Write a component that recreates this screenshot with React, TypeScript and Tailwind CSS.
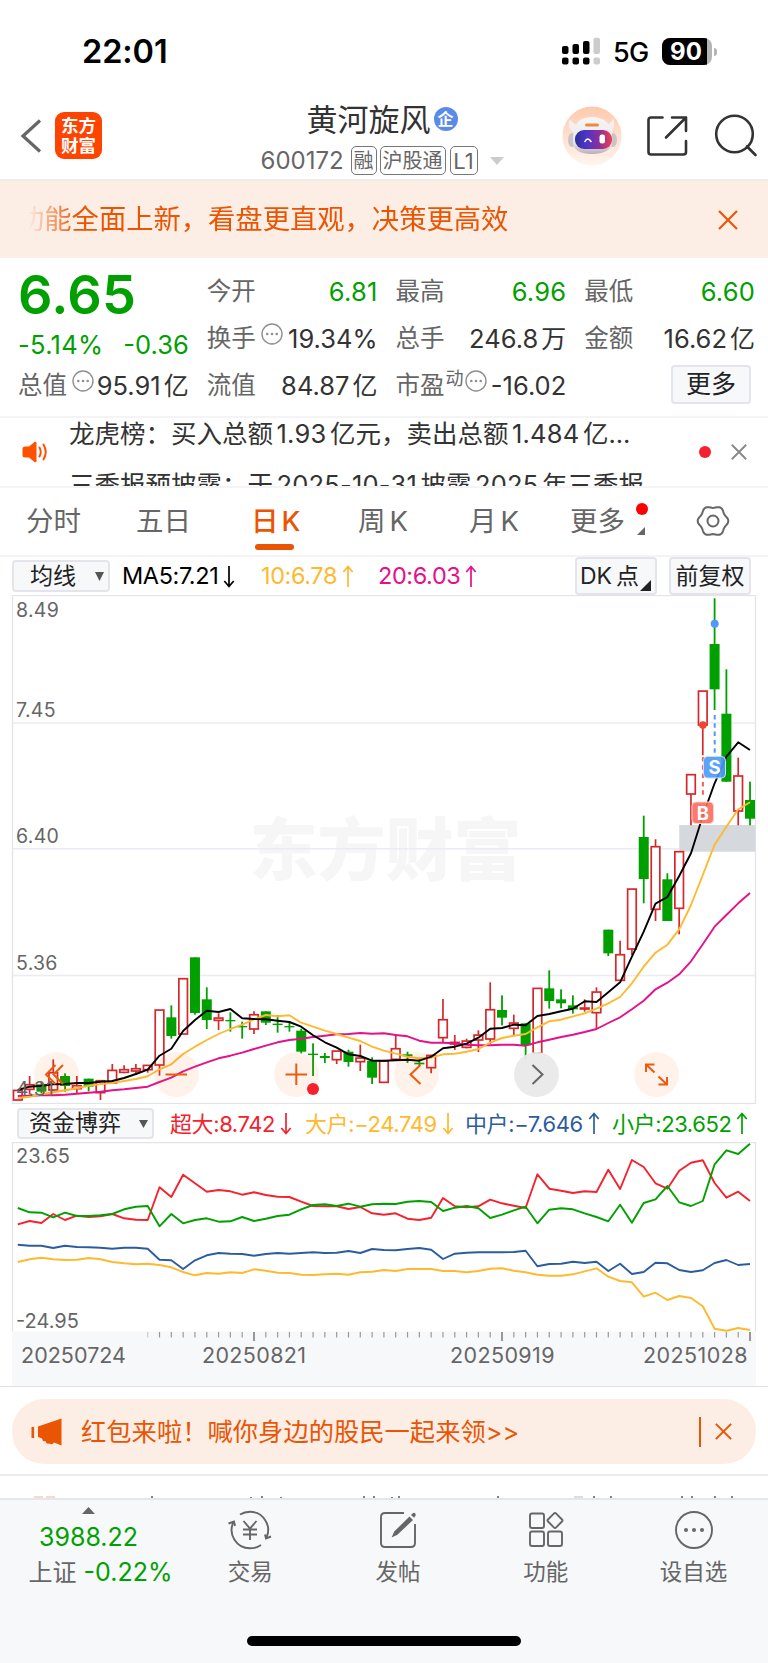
import React from "react";

type Candle = [string, number, number, number, number];

const PITCH = 11.81;
const X0 = 17.8;
const px = (i: number) => X0 + PITCH * i;

/* colour, wick top, body top, body bottom, wick bottom */
const EARLY: Candle[] = [
  ["r", 570, 570, 600, 600], ["r", 528, 553, 568, 583], ["g", 545, 553, 575, 580], ["r", 478, 517, 570, 572],
  ["g", 520, 528, 558, 575], ["r", 528, 556, 566, 580], ["g", 536, 536, 560, 574], ["r", 541, 541, 578, 600],
  ["r", 492, 510, 549, 549], ["r", 496, 508, 517, 520], ["r", 492, 505, 513, 525], ["r", 495, 495, 509, 518],
  ["r", 329, 329, 495, 527], ["g", 316, 352, 408, 416], ["r", 235, 235, 402, 402], ["g", 172, 172, 339, 344],
  ["g", 262, 298, 360, 387], ["r", 340, 353, 361, 390], ["g", 337, 360, 364, 395], ["g", 365, 378, 382, 416],
  ["r", 334, 343, 387, 402], ["g", 334, 334, 368, 375], ["g", 345, 371, 375, 398], ["g", 366, 378, 382, 395],
  ["g", 386, 392, 455, 460], ["g", 430, 461, 465, 528], ["g", 459, 468, 474, 489], ["r", 452, 452, 479, 492],
  ["g", 449, 455, 486, 500], ["r", 434, 473, 485, 513], ["g", 472, 482, 533, 552], ["r", 482, 482, 547, 547],
  ["r", 402, 445, 478, 482], ["g", 455, 463, 469, 489], ["g", 474, 488, 493, 497], ["r", 465, 465, 503, 520],
  ["r", 297, 358, 413, 428], ["r", 405, 426, 432, 450], ["r", 416, 422, 442, 445], ["r", 391, 404, 420, 456],
  ["r", 247, 328, 417, 432], ["g", 286, 330, 353, 376], ["r", 344, 368, 385, 406], ["g", 370, 370, 436, 478],
  ["r", 264, 264, 460, 460], ["g", 211, 265, 303, 326], ["g", 268, 298, 310, 325], ["g", 286, 316, 328, 341],
  ["r", 298, 323, 327, 335], ["r", 262, 275, 338, 387], ["g", 89, 89, 160, 168], ["r", 122, 163, 241, 241],
];
const LATE: Candle[] = [
  ["r", 888.7, 888.7, 949, 955], ["g", 815.7, 837, 879, 903.3], ["r", 839.3, 846.3, 909.3, 921], ["g", 873.3, 879.3, 921, 921],
  ["r", 851.3, 851.3, 908.3, 934.3], ["r", 774.3, 774.3, 794, 825.3], ["r", 690.7, 690.7, 725, 755.3], ["g", 598.3, 644, 689.3, 710],
  ["g", 669.3, 713.7, 781.7, 781.7], ["r", 757.7, 775.6, 811, 825.3], ["g", 781.7, 800, 818.7, 825.3],
];
const third = (v: number) => 900 + v / 3;
const CANDLES: Candle[] = [
  ...EARLY.map(([c, a, b, d, e]): Candle => [c, third(a), third(b), third(d), third(e)]),
  ...LATE,
];

const MA5 = [
  ...[570, 560, 557, 553, 552, 549, 549, 545, 543, 534, 522, 509, 467, 446, 393, 360, 332, 336, 327, 355, 357, 358, 362, 366, 380, 406, 427, 443, 463, 468, 482, 482, 481, 479, 482, 470, 445, 440, 431, 413, 386, 384, 374, 376, 348, 342, 334, 326, 304, 306, 277, 247, 170, 95].map(third),
  903.7, 897, 876, 853.3, 816, 783.3, 756.7, 742.3, 750,
];
const MA10 = [
  ...[594, 590, 583, 577, 571, 565, 557, 552, 549, 543, 537, 529, 508, 493, 462, 440, 420, 402, 387, 374, 358, 345, 349, 346, 368, 380, 392, 402, 413, 423, 440, 452, 461, 470, 475, 473, 463, 461, 455, 447, 428, 414, 407, 402, 382, 364, 359, 349, 340, 326, 310, 291, 250, 200, 158, 134, 88].map(third),
  905, 875, 844.7, 826.7, 809.3, 802.3,
];
const MA20 = [
  ...[588, 587, 586, 586, 584, 581, 578, 575, 571, 568, 564, 560, 546, 533, 514, 500, 487, 475, 467, 458, 447, 437, 427, 420, 416, 411, 407, 403, 402, 399, 401, 400, 405, 409, 422, 428, 428, 430, 434, 436, 436, 434, 434, 437, 427, 419, 411, 404, 396, 387, 369, 352, 328, 302, 268, 248, 223, 184, 133].map(third),
  926.7, 915, 903.3, 893,
];

const flow = (v: number) => 1100 + v / 3;
const SUPER = [373, 363, 369, 342, 360, 347, 351, 349, 342, 355, 359, 360, 262, 291, 224, 250, 275, 270, 274, 284, 277, 285, 290, 291, 305, 318, 319, 319, 327, 321, 340, 344, 340, 356, 360, 353, 294, 319, 322, 319, 299, 310, 317, 324, 223, 266, 272, 279, 274, 276, 209, 267, 180, 201, 250, 266, 212, 188, 181, 249, 293, 275, 303].map(flow);
const SMALL = [324, 337, 338, 352, 338, 348, 348, 346, 342, 328, 320, 318, 379, 342, 370, 360, 355, 365, 364, 351, 363, 356, 348, 344, 328, 315, 313, 318, 311, 320, 313, 311, 312, 305, 303, 306, 333, 323, 318, 325, 354, 344, 331, 320, 370, 329, 325, 328, 340, 351, 364, 314, 368, 309, 298, 258, 307, 318, 303, 193, 151, 162, 131].map(flow);
const MIDDLE = [434, 437, 437, 444, 437, 441, 442, 443, 446, 443, 443, 446, 479, 481, 507, 481, 466, 459, 461, 462, 467, 462, 459, 461, 459, 457, 459, 458, 453, 459, 447, 450, 451, 447, 444, 449, 477, 461, 458, 457, 457, 457, 456, 452, 499, 492, 491, 485, 489, 485, 513, 491, 522, 516, 488, 490, 510, 516, 511, 489, 480, 495, 492].map(flow);
const BIG = [486, 478, 473, 478, 480, 479, 474, 478, 486, 490, 493, 491, 495, 502, 516, 526, 519, 521, 517, 519, 508, 512, 518, 519, 524, 525, 523, 521, 524, 517, 515, 510, 513, 507, 507, 507, 513, 513, 517, 513, 506, 505, 512, 517, 524, 527, 527, 523, 514, 505, 530, 543, 547, 590, 578, 600, 588, 594, 619, 686, 692, 684, 690].map(flow);

const pts = (a: number[]) => a.map((y, i) => `${px(i).toFixed(1)},${y.toFixed(1)}`).join(" ");

/* six-lobed outline of the settings gear */
const GEAR = Array.from({ length: 72 }, (_, k) => {
  const a = (k * Math.PI) / 36;
  const r = 14.2 + 1.1 * Math.cos(6 * a);
  return `${(17 + r * Math.cos(a)).toFixed(2)},${(17 + r * Math.sin(a)).toFixed(2)}`;
}).join(" ");

function Line({ data, color }: { data: number[]; color: string }) {
  return <polyline points={pts(data)} fill="none" stroke={color} strokeWidth="1.9" strokeLinejoin="round" />;
}

function Cross({ size, color, width }: { size: number; color: string; width: number }) {
  return (
    <svg width={size} height={size} viewBox="0 0 20 20" className="block shrink-0" stroke={color} strokeWidth={width} fill="none">
      <path d="M1 1L19 19M19 1L1 19" />
    </svg>
  );
}

function Dots() {
  return (
    <svg width="22" height="22" viewBox="0 0 22 22" className="block shrink-0">
      <circle cx="11" cy="11" r="10" fill="none" stroke="#8f8f8f" strokeWidth="1.4" />
      <g fill="#8f8f8f"><circle cx="6.3" cy="11" r="1.3" /><circle cx="11" cy="11" r="1.3" /><circle cx="15.7" cy="11" r="1.3" /></g>
    </svg>
  );
}

function StatusBar() {
  return (
    <div className="flex h-[90px] items-start pl-[82px]">
      <div className="mt-[36px] w-[479px] text-[32.500px] leading-[32px] font-semibold tracking-[-0.1px] text-black">22:01</div>
      <svg width="40" height="28" viewBox="0 0 40 28" className="mt-[37px]">
        <g fill="#000">
          <rect x="1" y="9" width="6.5" height="8" rx="2" /><rect x="11.5" y="7" width="6.5" height="10" rx="2" /><rect x="22" y="4" width="6.5" height="13" rx="2" />
          <rect x="1" y="20.5" width="6.5" height="7" rx="2" /><rect x="11.5" y="20.5" width="6.5" height="7" rx="2" /><rect x="22" y="20.5" width="6.5" height="7" rx="2" />
        </g>
        <g fill="#ccc"><rect x="32.5" y="0.7" width="6.5" height="16.3" rx="2" /><rect x="32.5" y="20.5" width="6.5" height="7" rx="2" /></g>
      </svg>
      <div className="mt-[40px] ml-[12px] w-[49px] text-[27px] leading-[26px] font-medium tracking-[-0.6px] text-black">5G</div>
      <div className="mt-[38px] flex items-center">
        <div className="flex h-[27px] w-[50px] overflow-hidden rounded-[8px] bg-[#b5b5b5]">
          <div className="flex h-full w-[45px] items-center justify-center bg-black pl-[3px] text-[24px] leading-none font-bold text-white">90</div>
        </div>
        <div className="ml-[1.5px] h-[8px] w-[3px] rounded-r-full bg-[#b5b5b5]" />
      </div>
    </div>
  );
}

function Robot() {
  return (
    <svg width="60" height="60" viewBox="0 0 60 60" className="mt-[16px] shrink-0">
      <defs>
        <linearGradient id="halo" x1="0" y1="0" x2="0" y2="1"><stop offset="0" stopColor="#ffc9ad" /><stop offset="1" stopColor="#fff5ef" /></linearGradient>
        <linearGradient id="visor" x1="0" y1="0" x2="1" y2="0"><stop offset="0" stopColor="#2e3192" /><stop offset=".3" stopColor="#4b35c8" /><stop offset=".65" stopColor="#8b2f9c" /><stop offset="1" stopColor="#ee3f4e" /></linearGradient>
        <linearGradient id="shell" x1="0" y1="0" x2="0" y2="1"><stop offset="0" stopColor="#f7f5f6" /><stop offset=".7" stopColor="#ebe7e9" /><stop offset="1" stopColor="#b8b0b6" /></linearGradient>
      </defs>
      <circle cx="30" cy="30" r="29.5" fill="url(#halo)" />
      <path d="M8 13C5 19 8 26 14 27L19 18C13 19 10 17 8 13ZM51 13C54 19 51 26 46 27L41 18C47 19 49 17 51 13Z" fill="#f3f0f2" />
      <ellipse cx="10" cy="34" rx="4" ry="7" fill="#c9c4ca" /><ellipse cx="51" cy="34" rx="4" ry="7" fill="#c9c4ca" />
      <path d="M30 11C18 11 11 18 11 30V36C11 44 18 48 30 48S50 44 50 36V30C50 18 42 11 30 11Z" fill="url(#shell)" />
      <rect x="23" y="17.4" width="14" height="3" rx="1.5" fill="#e88b45" />
      <rect x="13" y="24" width="37" height="19" rx="9" fill="url(#visor)" />
      <path d="M23 35.500Q25.500 30.500 29 35.500" fill="none" stroke="#fff" strokeWidth="1.6" strokeLinecap="round" />
      <rect x="37.500" y="28.500" width="5.500" height="9" rx="2.300" fill="#fff" />
    </svg>
  );
}

function Header() {
  const tag = "flex h-[29px] items-center justify-center rounded-[5px] border border-[#777] leading-none text-[#666]";
  return (
    <header className="flex h-[91px] items-start border-b-2 border-[#ececee]">
      <svg width="24" height="36" viewBox="0 0 24 36" className="mt-[28px] ml-[19px] shrink-0"><path d="M21 2.500L4 18L21 33.500" fill="none" stroke="#666" strokeWidth="3.2" /></svg>
      <div className="mt-[22px] ml-[12px] flex h-[47px] w-[47px] shrink-0 flex-col items-center justify-center rounded-[9px] bg-[#ff4400] text-[17.500px] leading-[19.500px] font-bold text-white">
        <span>东方</span><span>财富</span>
      </div>
      <div className="mt-[12px] flex w-[460px] shrink-0 flex-col items-center pl-[100px]">
        <div className="flex h-[34px] items-center">
          <h1 className="text-[31px] leading-none font-normal text-[#333]">黄河旋风</h1>
          <span className="ml-[3px] flex h-[24px] w-[24px] items-center justify-center rounded-full bg-[#5b8bea] text-[16px] leading-none font-bold text-white">企</span>
        </div>
        <div className="mt-[10px] flex items-center">
          <span className="w-[90px] text-[24px] leading-none text-[#666]">600172</span>
          <span className={`${tag} w-[26px] text-[20px]`}>融</span>
          <span className={`${tag} ml-[3px] w-[66px] text-[20px]`}>沪股通</span>
          <span className={`${tag} ml-[4px] w-[28px] text-[22px]`}>L1</span>
          <svg width="14" height="8" viewBox="0 0 14 8" className="ml-[12px]"><path d="M0 0H14L7 8Z" fill="#ccc" /></svg>
        </div>
      </div>
      <div className="flex shrink-0 items-start">
        <Robot />
        <svg width="42" height="42" viewBox="0 0 42 42" className="mt-[25px] ml-[24px]" fill="none" stroke="#333" strokeWidth="2.6" strokeLinecap="round" strokeLinejoin="round">
          <path d="M16.500 2.500H5Q2.500 2.500 2.500 5V37Q2.500 39.500 5 39.500H37.500Q40 39.500 40 37V26M40 16V2.500H26M40 2.500L20 22.500" />
        </svg>
        <svg width="44" height="44" viewBox="0 0 44 44" className="mt-[23px] ml-[26px]" fill="none" stroke="#333" strokeWidth="2.6" strokeLinecap="round">
          <circle cx="20.500" cy="21" r="18.300" /><path d="M33 33.500L41.500 42" />
        </svg>
      </div>
    </header>
  );
}

function Cell({ label, value, unit, green, extra }: { label: string; value: string; unit?: string; green?: boolean; extra?: React.ReactNode }) {
  return (
    <div className="flex h-[47px] items-center justify-between">
      <span className="flex items-center text-[24.500px] leading-none whitespace-nowrap text-[#666]">{label}{extra}</span>
      <span className={green ? "text-[25.500px] leading-none tracking-[0.2px] whitespace-nowrap text-[#00a000]" : "text-[25.500px] leading-none whitespace-nowrap text-[#333]"}>
        {value}{unit && <span className="ml-[3px] text-[25px]">{unit}</span>}
      </span>
    </div>
  );
}

function Quote() {
  return (
    <section className="grid h-[160px] grid-cols-4 content-start gap-x-[18px] border-b-2 border-[#f4f4f6] pt-[10px] pr-[13px] pl-[18px]">
      <div className="row-span-2 flex h-[94px] flex-col text-[#00a000]">
        <div className="text-[54px] leading-[53px] font-semibold tracking-[0.3px]">6.65</div>
        <div className="mt-[11px] flex justify-between text-[25.500px] leading-[25px]"><span className="tracking-[0.3px]">-5.14%</span><span>-0.36</span></div>
      </div>
      <Cell label="今开" value="6.81" green /><Cell label="最高" value="6.96" green /><Cell label="最低" value="6.60" green />
      <Cell label="换手" value="19.34%" extra={<span className="mb-[10px] ml-[5px]"><Dots /></span>} />
      <Cell label="总手" value="246.8" unit="万" /><Cell label="金额" value="16.62" unit="亿" />
      <Cell label="总值" value="95.91" unit="亿" extra={<span className="mb-[10px] ml-[5px]"><Dots /></span>} />
      <Cell label="流值" value="84.87" unit="亿" />
      <Cell label="市盈" value="-16.02" extra={<><span className="mb-[14px] ml-[1px] text-[18px]">动</span><span className="mb-[10px] ml-[1px]"><Dots /></span></>} />
      <div className="flex h-[47px] items-center justify-end pr-[4px]">
        <button className="mb-[3px] h-[39px] w-[80px] rounded-[4px] border-2 border-[#e3e5ea] bg-[#f7f8fa] text-[25px] leading-none text-[#222]">更多</button>
      </div>
    </section>
  );
}

function News() {
  const num = "mx-[3.500px] tracking-[0.2px]";
  return (
    <section className="flex h-[70px] items-center overflow-hidden border-b-2 border-[#f4f4f6]">
      <svg width="28" height="24" viewBox="0 0 28 24" className="ml-[21px] shrink-0">
        <path d="M1.500 9Q1.500 6.500 4 6.500H8L13.500 2Q15.500 1.200 15.500 3V21Q15.500 22.800 13.500 22L8 17.500H4Q1.500 17.500 1.500 15Z" fill="#ff5000" />
        <path d="M18.500 7.500Q21 12 18.500 16.500M22.500 4.500Q27 12 22.500 19.500" fill="none" stroke="#ff5000" strokeWidth="2" strokeLinecap="round" />
      </svg>
      <div className="ml-[20px] h-full w-[630px] overflow-hidden text-[25.500px] leading-[51px] whitespace-nowrap text-[#333]">
        <p className="-mt-[10px]">龙虎榜：买入总额<span className={num}>1.93</span>亿元，卖出总额<span className={num}>1.484</span>亿...</p>
        <p>三季报预披露：于<span className={num}>2025-10-31</span>披露<span className={num}>2025</span>年三季报</p>
      </div>
      <div className="h-[12px] w-[12px] shrink-0 rounded-full bg-[#f5222d]" />
      <div className="ml-[20px]"><Cross size={16} color="#888" width={2.4} /></div>
    </section>
  );
}

function Tabs() {
  const t = "flex h-full items-center pt-[1px] text-[27.500px] leading-none whitespace-nowrap";
  return (
    <nav className="flex h-[69px] items-start border-b-2 border-[#f4f4f6] pl-[26px] text-[#666]">
      <div className={`${t} w-[110px]`}>分时</div>
      <div className={`${t} w-[115px]`}>五日</div>
      <div className={`${t} relative w-[107px] font-medium text-[#ea5504]`}>日<span className="ml-[3px]">K</span><span className="absolute bottom-[5px] left-[4px] h-[6px] w-[39px] rounded-full bg-[#ea5504]" /></div>
      <div className={`${t} w-[111px]`}>周<span className="ml-[4px]">K</span></div>
      <div className={`${t} w-[101px]`}>月<span className="ml-[4px]">K</span></div>
      <div className={`${t} relative w-[126px]`}>更多
        <span className="absolute top-[15px] left-[66px] h-[12px] w-[12px] rounded-full bg-[#ff0000]" />
        <svg width="8" height="8" viewBox="0 0 8 8" className="absolute top-[39px] left-[67px]"><path d="M8 0V8H0Z" fill="#666" /></svg>
      </div>
      <svg width="34" height="34" viewBox="0 0 34 34" className="mt-[16px]" fill="none" stroke="#666" strokeWidth="2" strokeLinejoin="round">
        <polygon points={GEAR} />
        <circle cx="17" cy="17" r="5.500" />
      </svg>
    </nav>
  );
}

function MaRow() {
  return (
    <div className="flex h-[38px] items-center pl-[12px] text-[23.500px] leading-none tracking-[-0.4px] whitespace-nowrap">
      <button className="flex h-[32px] w-[98px] items-center rounded-[4px] border-2 border-[#e3e5ea] bg-[#f7f8fa] pl-[16px] text-[23px] leading-none tracking-normal text-[#222]">
        均线<svg width="9" height="9" viewBox="0 0 9 9" className="ml-[19px]"><path d="M0 0H9L4.500 9Z" fill="#555" /></svg>
      </button>
      <Reading className="ml-[12px] w-[139px] text-black" text="MA5:7.21" />
      <Reading className="w-[117px] text-[#ffb92e]" text="10:6.78" up />
      <Reading className="w-[197px] text-[#e5108a]" text="20:6.03" up />
      <button className="relative h-[38px] w-[82px] rounded-[4px] border-2 border-[#e3e5ea] bg-[#f7f8fa] pr-[13px] text-[23px] leading-none tracking-normal whitespace-nowrap text-[#222]">
        DK<span className="ml-[4px]">点</span>
        <svg width="11" height="11" viewBox="0 0 11 11" className="absolute right-[4px] bottom-[2px]"><path d="M11 0V11H0Z" fill="#222" /></svg>
      </button>
      <button className="ml-[12px] h-[38px] w-[82px] rounded-[4px] border-2 border-[#e3e5ea] bg-[#f7f8fa] text-[23px] leading-none tracking-normal whitespace-nowrap text-[#222]">前复权</button>
    </div>
  );
}

function Reading({ text, up, className }: { text: string; up?: boolean; className: string }) {
  return (
    <span className={`flex shrink-0 items-center ${className}`}>
      {text}
      <svg width="12" height="23" viewBox="0 0 12 23" className="ml-[5px] shrink-0" fill="none" stroke="currentColor" strokeWidth="1.7">
        {up ? <path d="M6 22V1.500M1.300 7L6 1.500L10.700 7" /> : <path d="M6 1V21.500M1.300 16L6 21.500L10.700 16" />}
      </svg>
    </span>
  );
}

function KChart() {
  const labels: [string, number][] = [["8.49", 617], ["7.45", 717.2], ["6.40", 843.2], ["5.36", 969.8], ["4.31", 1096]];
  return (
    <div className="relative h-[509px]">
      <svg width="768" height="509" viewBox="0 595 768 509" className="block font-['Inter','Noto_Sans_CJK_SC',sans-serif]">
        <text x="385.500" y="875" textAnchor="middle" fontSize="68" fontWeight="900" fill="#f6f6f6">东方财富</text>
        <g stroke="#e9ecf2" strokeWidth="1.6"><path d="M12.500 723H755.500M12.500 848.700H755.500M12.500 975.500H755.500" /></g>
        <rect x="12.500" y="595.500" width="743" height="508" fill="none" stroke="#e2e4e7" strokeWidth="1.3" />
        <rect x="679.300" y="825" width="76" height="26.700" fill="#d5d8dd" />
        {CANDLES.map(([c, a, b, d, e], i) => {
          const x = px(i);
          if (c === "g")
            return <g key={i} fill="#00a000"><rect x={x - 0.9} y={a} width="1.8" height={e - a} /><rect x={x - 5} y={b} width="10" height={d - b} /></g>;
          return (
            <g key={i} stroke="#d4282d" strokeWidth="1.7" fill="#fff">
              {a < b && <path d={`M${x} ${a}V${b}`} />}
              {e > d && <path d={`M${x} ${d}V${e}`} />}
              <rect x={x - 4.3} y={b + 0.4} width="8.6" height={Math.max(0.4, d - b - 0.4)} />
            </g>
          );
        })}
        <path d="M714.700 715V753" stroke="#4f9af8" strokeWidth="2" strokeDasharray="4.500 3.800" />
        <path d="M702.900 757V798" stroke="#f7604f" strokeWidth="2" strokeDasharray="4.500 3.800" />
        <circle cx="714.700" cy="623.700" r="4" fill="#4f9af8" />
        <circle cx="702.900" cy="725" r="3.800" fill="#f04433" />
        <Line data={MA20} color="#e5108a" />
        <Line data={MA10} color="#ffb92e" />
        <Line data={MA5} color="#000" />
        <g fontSize="18.500" fontWeight="700" textAnchor="middle" fill="#fff">
          <rect x="703.500" y="756.500" width="22" height="21.500" rx="4" fill="#4a98fb" fillOpacity=".9" stroke="#c9dffb" strokeWidth="1" /><text x="714.500" y="774.200">S</text>
          <rect x="692" y="802" width="21.500" height="21.500" rx="4" fill="#fb6b5c" fillOpacity=".9" stroke="#fbd3cd" strokeWidth="1" /><text x="702.800" y="819.600">B</text>
        </g>
        <g fontSize="19.500" fill="#666" letterSpacing="0.3">{labels.map(([s, y]) => <text key={s} x="16" y={y}>{s}</text>)}</g>
      </svg>
      <div className="absolute top-[457px] left-[34px] flex gap-[75px]">
        <Round><path d="M21.500 13L12 22.500L21.500 32M29 13L19.500 22.500L29 32" /></Round>
        <Round><path d="M11.500 22.500H33" /></Round>
        <Round dot><path d="M11.500 22.500H33M22.300 11.500V33" /></Round>
        <Round><path d="M26.500 13L16.500 22.500L26.500 32" /></Round>
        <Round grey><path d="M18.500 13L28.500 22.500L18.500 32" /></Round>
        <Round><path d="M12 20V12.500H20.500M12 12.500L20.500 20.500M33 25V32.500H24.500M33 32.500L24.500 24.500" /></Round>
      </div>
    </div>
  );
}

function Round({ children, grey, dot }: { children: React.ReactNode; grey?: boolean; dot?: boolean }) {
  return (
    <button className={grey ? "relative h-[45px] w-[45px] rounded-full bg-[#e9e9e9]/95" : "relative h-[45px] w-[45px] rounded-full bg-[#ff5a00]/8"}>
      <svg width="45" height="45" viewBox="0 0 45 45" className="block" fill="none" stroke={grey ? "#666" : "#ee5a0c"} strokeWidth="2">{children}</svg>
      {dot && <span className="absolute top-[31px] left-[33px] h-[12px] w-[12px] rounded-full bg-[#f5222d]" />}
    </button>
  );
}

function FlowChart() {
  return (
    <>
      <div className="flex h-[38px] items-center pt-[1px] pl-[17px] text-[22px] leading-none tracking-[-0.4px] whitespace-nowrap">
        <button className="flex h-[31px] w-[137px] items-center rounded-[4px] border-2 border-[#e3e5ea] bg-[#f7f8fa] pl-[10px] text-[23px] leading-none tracking-normal whitespace-nowrap text-[#222]">
          资金博弈<svg width="9" height="8" viewBox="0 0 9 8" className="ml-[18px] shrink-0"><path d="M0 0H9L4.500 8Z" fill="#555" /></svg>
        </button>
        <Reading className="ml-[16px] w-[135px] text-[#f5222d]" text="超大:8.742" />
        <Reading className="w-[160px] text-[#ffb92e]" text="大户:−24.749" />
        <Reading className="w-[147px] text-[#2d5c9e]" text="中户:−7.646" up />
        <Reading className="text-[#00a000]" text="小户:23.652" up />
      </div>
      <svg width="768" height="244" viewBox="0 1142 768 244" className="block font-['Inter',sans-serif]">
        <path d="M12.500 1331.500V1142.500H755.500V1331.500" fill="none" stroke="#e2e4e7" strokeWidth="1.300" />
        <rect x="12" y="1331.500" width="744" height="55.500" fill="#f7f8fa" />
        {Array.from({ length: 52 }, (_, k) => k + 11).map((i) => {
          const major = i === 20 || i === 41 || i === 62;
          return <path key={i} d={`M${px(i)} 1332V${major ? 1341 : 1337.5}`} stroke={i === 11 ? "#ccc" : "#999"} strokeWidth={major ? 2 : 1.2} />;
        })}
        <Line data={BIG} color="#ffb92e" />
        <Line data={MIDDLE} color="#2d5c9e" />
        <Line data={SUPER} color="#f5222d" />
        <Line data={SMALL} color="#00a000" />
        <g fontSize="20" fill="#666"><text x="16" y="1162.800">23.65</text><text x="16" y="1328">-24.95</text></g>
        <g fontSize="21.500" fill="#666">
          <text x="21" y="1362.700" textLength="105">20250724</text><text x="202" y="1362.700" textLength="104">20250821</text>
          <text x="450" y="1362.700" textLength="104.500">20250919</text><text x="643" y="1362.700" textLength="104.500">20251028</text>
        </g>
      </svg>
    </>
  );
}

function Promo() {
  return (
    <div className="h-[90px] border-t border-b-2 border-t-[#dfe1e6] border-b-[#ececee] px-[12px] pt-[12px]">
      <div className="flex h-[65px] items-center rounded-[32px] bg-[#fdeee5] text-[#ea5504]">
        <svg width="32" height="28" viewBox="0 0 32 28" className="ml-[19px] shrink-0" fill="#ea5504">
          <rect x="0.500" y="9" width="2.600" height="11" /><path d="M7 8.500L30.500 0.500V27.500L23 24.500Q21.500 27.500 18 25.500Q15 26.500 14.500 23Q11.500 24 11 20.500L7 19Z" />
        </svg>
        <div className="ml-[18px] w-[618px] text-[25.300px] leading-none whitespace-nowrap">红包来啦！喊你身边的股民一起来领&gt;&gt;</div>
        <div className="h-[30px] w-[1.500px] bg-[#ea5504]" />
        <div className="ml-[14px]"><Cross size={17} color="#ea5504" width={2.3} /></div>
      </div>
    </div>
  );
}

function BottomNav() {
  const col = "flex flex-1 flex-col items-center pt-[8px] pr-[1px] text-[22.500px] leading-none text-[#666]";
  const icon = { width: 44, height: 44, viewBox: "0 0 44 44", fill: "none", stroke: "#666", strokeWidth: 1.9, className: "mb-[9px]" };
  return (
    <footer className="h-[165px] border-t-2 border-[#e4e6ea] bg-[#f7f8fa]">
      <div className="flex h-[136px]">
        <div className="flex w-[177px] flex-col items-center text-[#00a000]">
          <svg width="13" height="7" viewBox="0 0 13 7" className="mt-[7px]"><path d="M6.500 0L13 7H0Z" fill="#666" /></svg>
          <div className="mt-[11px] text-[25px] leading-[25px]">3988.22</div>
          <div className="mt-[10px] flex items-center pl-[24px] text-[25px] leading-[25px]"><span className="mr-[7px] text-[24px] text-[#666]">上证</span><span>-0.22%</span></div>
        </div>
        <div className={col}>
          <svg {...icon}>
            <path d="M12 6.500Q16.500 3.700 22 3.700A18.300 18.300 0 0 1 38.500 29.500M33 37Q28.500 40.300 22 40.300A18.300 18.300 0 0 1 5.500 14" />
            <path d="M0.500 15.500L6 13.500L7 18M43 28.500L38 30.500L37 26.500M15.500 13L22 20.500L28.500 13M22 20.500V32M15 21.500H29M15 26.500H29" />
          </svg>交易
        </div>
        <div className={col}>
          <svg {...icon}>
            <path d="M28 5H9Q5 5 5 9V35Q5 39 9 39H35Q39 39 39 35V16" />
            <path d="M33.500 9.500L36 12L21 26.200L17 28L18.800 24ZM36 7L37.500 5.600Q39 5 39 7L38 8.700Z" fill="#666" strokeWidth="1.400" />
          </svg>发帖
        </div>
        <div className={col}>
          <svg {...icon}>
            <rect x="6" y="5.500" width="14" height="14.500" rx="2" /><rect x="6" y="23.500" width="14" height="14.500" rx="2" /><rect x="24" y="23.500" width="14" height="14.500" rx="2" />
            <path d="M29.800 5.700Q31 4.500 32.200 5.700L38 11.500Q39 12.500 38 13.500L32.200 19.300Q31 20.500 29.800 19.300L24 13.500Q23 12.500 24 11.500Z" />
          </svg>功能
        </div>
        <div className={col}>
          <svg {...icon}>
            <circle cx="22" cy="22" r="18" /><g fill="#666" stroke="none"><circle cx="14" cy="22" r="2" /><circle cx="22" cy="22" r="2" /><circle cx="30" cy="22" r="2" /></g>
          </svg>设自选
        </div>
      </div>
      <div className="mx-auto h-[10px] w-[274px] rounded-full bg-black" />
    </footer>
  );
}

export default function App() {
  return (
    <main className="h-[1663px] w-[768px] overflow-hidden bg-white font-['Inter','Noto_Sans_CJK_SC',sans-serif]">
      <StatusBar />
      <Header />
      <div className="flex h-[77px] items-center bg-[#fdeee5] pl-[28px] text-[#ea5504]">
        <div className="w-[690px] overflow-hidden text-[27.300px] leading-[40px] whitespace-nowrap [mask-image:linear-gradient(to_right,transparent,black_48px)]">
          <p className="-ml-[11px]">功能全面上新，看盘更直观，决策更高效</p>
        </div>
        <Cross size={20} color="#ea5504" width={2.1} />
      </div>
      <Quote />
      <News />
      <Tabs />
      <MaRow />
      <KChart />
      <FlowChart />
      <Promo />
      <div className="flex h-[22px] items-end">
        <svg width="768" height="3" viewBox="0 0 768 3" className="block">
          <path d="M34 2H43M46 2H55" stroke="#f3b48f" strokeWidth="1.200" />
          <path d="M152 1V3M251 2V3M262 1V3M281 2V3M364 1V3M374 1V3M392 2V3M399 1V3M498 1V3M594 1V3M611 1V3M682 1V3M692 1V3M715 1V3M732 1V3" stroke="#777" strokeWidth="1.800" />
          <path d="M574 2H583" stroke="#bbb" />
        </svg>
      </div>
      <BottomNav />
    </main>
  );
}
